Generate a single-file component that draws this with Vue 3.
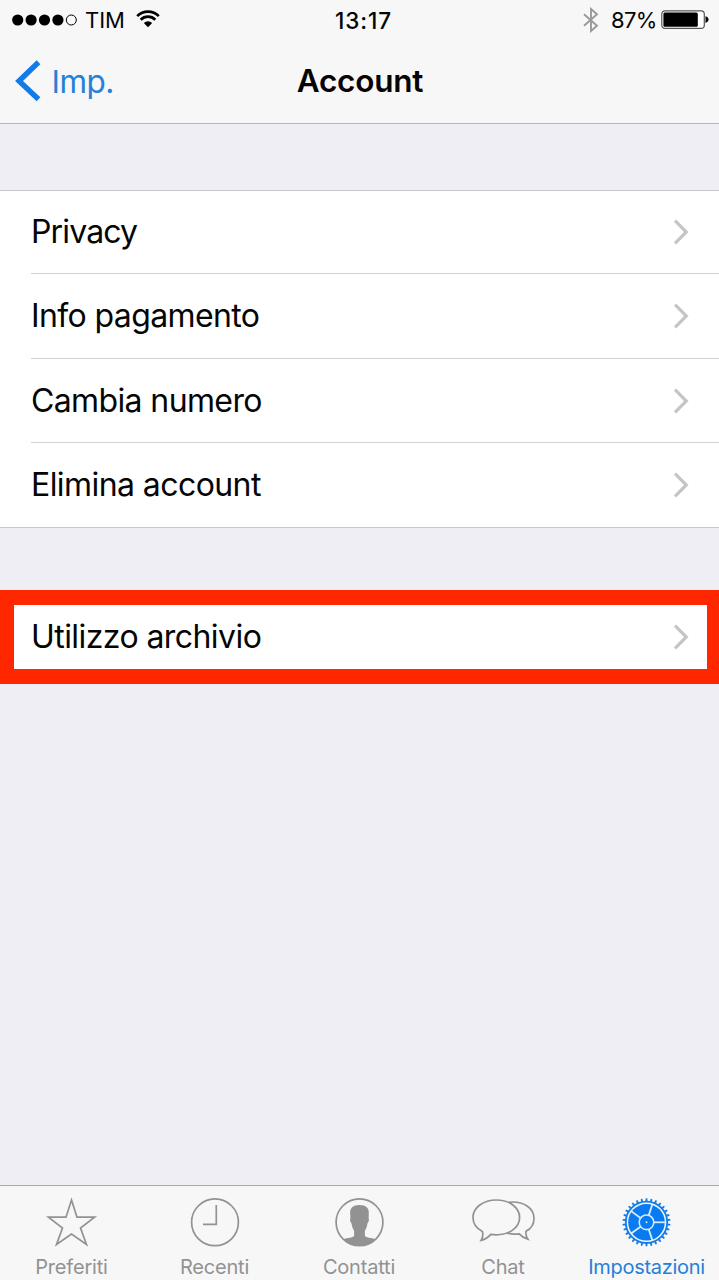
<script setup>
const rows = [
  { label: 'Privacy', cls: 'privacy' },
  { label: 'Info pagamento', cls: 'info' },
  { label: 'Cambia numero', cls: 'cambia' },
  { label: 'Elimina account', cls: 'elimina' },
]
const teeth = Array.from({ length: 30 }, (_, i) => i * 12)
const spokes = [0, 72, 144, 216, 288]
</script>

<template>
  <div class="screen">
    <header class="top">
      <div class="status">
        <div class="left">
          <svg class="dots" width="66" height="14" viewBox="0 0 66 14">
            <circle v-for="n in 4" :key="n" :cx="5.7 + (n - 1) * 13.4" cy="7" r="5.6" />
            <circle cx="59.3" cy="7" r="5" fill="none" stroke="#000" stroke-width="1" />
          </svg>
          <span class="carrier">TIM</span>
          <svg class="wifi" width="24" height="18" viewBox="0 0 24 18">
            <path d="M1.2 6.1a15.3 15.3 0 0 1 21.6 0M4.7 9.7a10.3 10.3 0 0 1 14.6 0" fill="none" stroke="#000" stroke-width="2.7" />
            <path d="M7.8 13a6.2 6.2 0 0 1 8.4 0L12 17.3z" />
          </svg>
        </div>
        <span class="time">13:17</span>
        <div class="right">
          <svg class="bt" width="16" height="26" viewBox="0 0 16 26">
            <path d="M1 7.3 14 18.7 8 24V2l6 5.3L1 18.7" fill="none" stroke="#999" stroke-width="1.9" />
          </svg>
          <span class="percent">87%</span>
          <svg class="battery" width="48" height="20" viewBox="0 0 48 20">
            <rect x=".8" y=".8" width="42.5" height="17.6" rx="3.2" fill="#fff" stroke="#555" stroke-width="1.2" />
            <rect x="2.4" y="2.4" width="34.4" height="14.4" rx="1.5" />
            <path d="M44.5 6.3q3 .8 3 3.3t-3 3.3z" />
          </svg>
        </div>
      </div>
      <div class="nav">
        <div class="back">
          <svg width="26" height="42" viewBox="0 0 26 42"><path d="M23.5 2.2 4 21 23.500 39.200" fill="none" stroke="#117bea" stroke-width="5.400" /></svg>
          <span>Imp.</span>
        </div>
        <h1>Account</h1>
      </div>
    </header>

    <main>
      <section class="group">
        <div v-for="r in rows" :key="r.label" class="row">
          <span :class="r.cls">{{ r.label }}</span>
          <svg class="chev" width="18" height="26" viewBox="0 0 18 26"><path d="M2 1.7 13.3 13 2 24.3" fill="none" stroke="#c5c5c8" stroke-width="3.2" /></svg>
        </div>
      </section>
      <section class="marked">
        <span class="archive">Utilizzo archivio</span>
        <svg class="chev" width="18" height="26" viewBox="0 0 18 26"><path d="M2 1.7 13.3 13 2 24.3" fill="none" stroke="#c5c5c8" stroke-width="3.2" /></svg>
      </section>
    </main>

    <footer class="tabs">
      <div class="tab">
        <svg width="64" height="52" viewBox="0 0 64 52">
          <path d="M31.5 4 37 21.2H54.6L40.5 32 46.5 48.5 31.5 38 16.5 48.5 22.5 32 8.400 21.2H26Z" fill="none" stroke="#929292" stroke-width="1.7" />
        </svg>
        <span class="pref">Preferiti</span>
      </div>
      <div class="tab">
        <svg width="64" height="52" viewBox="0 0 64 52" fill="none" stroke="#929292" stroke-width="1.7">
          <circle cx="32" cy="26.3" r="23.4" /><path d="M33.3 9V28.3H20" />
        </svg>
        <span class="rec">Recenti</span>
      </div>
      <div class="tab">
        <svg width="64" height="52" viewBox="0 0 64 52">
          <circle cx="32.5" cy="26.3" r="23.4" fill="none" stroke="#929292" stroke-width="1.7" />
          <path d="M32.5 9c-6.5 0-9.8 3-9.3 8.500l.2 4.400c-.8 1.500-.1 4.300 1.100 5.400.4 3.400 1.300 5.600 2.600 7.200v5.200c-1.500 2.400-6.400 2-10.800 3.300C20.5 47.300 26 49.600 32.5 49.600s12-2.300 16.200-6.600c-4.400-1.300-9.300-.9-10.800-3.300v-5.200c1.300-1.600 2.200-3.800 2.600-7.200 1.200-1.100 1.900-3.900 1.100-5.400l.2-4.400c.5-5.500-2.800-8.500-9.300-8.500z" fill="#929292" />
        </svg>
        <span class="cont">Contatti</span>
      </div>
      <div class="tab">
        <svg width="64" height="52" viewBox="0 0 64 52" stroke="#929292" stroke-width="1.7" fill="none">
          <path d="M37.5 6.3c14.5-1.8 25.500 5.500 25.500 16.100 0 5.900-3.100 10.300-8 12.900-.4 3 .3 5.700 1.900 8-3.500-1-6.600-3-8.700-5.400-5 .6-9.300.2-12.700-1.300" />
          <path d="M25.4 4C12.2 4 2 11.500 2 21.400c0 6.200 3.500 10.900 9.400 14.200.9 3.100.4 5.900-1.300 8.800 4.200-1.200 7.400-3.200 9.600-6 1.900.3 3.800.4 5.700.4 13 0 23.200-7.500 23.200-17.400S38.500 4 25.400 4z" fill="#f7f7f7" />
        </svg>
        <span class="chat">Chat</span>
      </div>
      <div class="tab active">
        <svg width="64" height="52" viewBox="0 0 64 52">
          <g transform="translate(31.5 26.3)">
            <path v-for="a in teeth" :key="a" d="M21-1.100 24-.8V.8L21 1.100z" fill="#147ce5" :transform="`rotate(${a + 6})`" />
            <circle r="20.7" fill="none" stroke="#147ce5" stroke-width="1.8" />
            <circle r="18.3" fill="#087bf2" />
            <path v-for="a in spokes" :key="a" d="M7 0H19" stroke="#d5ecfd" stroke-width="1.8" :transform="`rotate(${a})`" />
            <circle r="7.3" fill="#087bf2" stroke="#d5ecfd" stroke-width="1.6" />
            <circle r="1" fill="#d5ecfd" />
          </g>
        </svg>
        <span class="imp">Impostazioni</span>
      </div>
    </footer>
  </div>
</template>

<style>
body { margin: 0; }
</style>

<style scoped>
.screen { width: 719px; height: 1280px; display: flex; flex-direction: column; background: #efeef4; font-family: Inter, "Liberation Sans", sans-serif; color: #050505; overflow: hidden; }
.screen svg { display: block; flex: none; }
span { white-space: nowrap; }
.top { height: 124px; box-sizing: border-box; background: #f7f7f7; border-bottom: 1px solid #b4b4ba; }
.status { height: 40px; display: grid; grid-template-columns: 1fr auto 1fr; align-items: center; font-size: 22px; }
.left, .right { display: flex; align-items: center; }
.left { padding-left: 12px; }
.carrier { margin-left: 7px; width: 44px; }
.wifi { margin-left: 7px; margin-top: -2px; }
.time { font-size: 22.5px; font-weight: 550; width: 64px; text-align: center; margin-left: 8px; letter-spacing: .9px; }
.right { justify-content: flex-end; padding-right: 10px; }
.percent { margin-left: 12px; width: 45px; letter-spacing: -.6px; }
.battery { margin-left: 5px; }
.nav { height: 82px; display: grid; grid-template-columns: 1fr auto 1fr; align-items: center; }
.back { display: flex; align-items: center; padding-left: 15px; color: #2680d8; font-size: 31.5px; }
.back span { margin-left: 10.5px; letter-spacing: -.5px; }
h1 { margin: -2px 0 0 1px; font-size: 31.5px; font-weight: 600; letter-spacing: -.2px; }
main { flex: 1; }
.group { margin-top: 66px; border-top: 1px solid #c8c7cc; border-bottom: 1px solid #c8c7cc; background: #fff; height: 336px; display: grid; grid-template-rows: 83px 85px 84px 84px; }
.row { margin-left: 31px; border-bottom: 1px solid #d2d2d4; display: flex; align-items: center; justify-content: space-between; font-size: 32px; padding-right: 28px; }
.row:last-child { border-bottom: 0; }
.row span, .marked span { margin-top: -1px; letter-spacing: -.62px; }
.row .privacy { letter-spacing: -.85px; }
.row .elimina, .marked .archive { letter-spacing: -.57px; }
.marked { margin-top: 62px; height: 94px; box-sizing: border-box; border: solid #ff2700; border-width: 15px 12px 15px 14px; background: #fff; display: flex; align-items: center; justify-content: space-between; padding: 0 16px 0 17px; font-size: 32px; }
.tabs { height: 95px; box-sizing: border-box; border-top: 1px solid #a9a9af; background: #f7f7f7; display: grid; grid-template-columns: 143px 143px 146px 142px 145px; }
.tab { display: flex; flex-direction: column; align-items: center; padding-top: 10px; color: #929292; font-size: 20px; }
.tab span { margin-top: 7px; line-height: 24px; letter-spacing: -.2px; }
.active { color: #2680d8; }
.tab .imp { letter-spacing: -.3px; }
</style>
